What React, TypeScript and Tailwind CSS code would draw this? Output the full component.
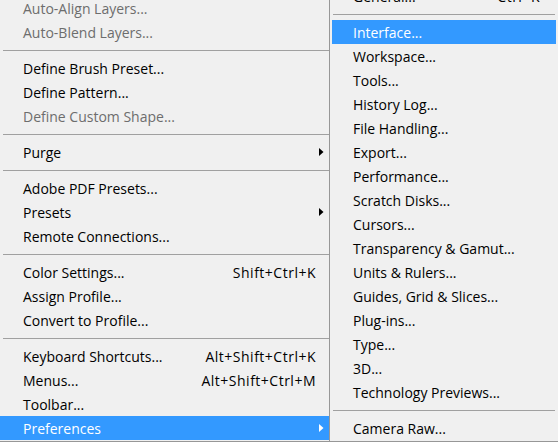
type Entry =
  | { sep: true }
  | {
      sep?: false;
      label: string;
      shortcut?: string;
      disabled?: boolean;
      sub?: boolean;
      active?: boolean;
    };

const editMenu: Entry[] = [
  { label: "Auto-Align Layers...", disabled: true },
  { label: "Auto-Blend Layers...", disabled: true },
  { sep: true },
  { label: "Define Brush Preset..." },
  { label: "Define Pattern..." },
  { label: "Define Custom Shape...", disabled: true },
  { sep: true },
  { label: "Purge", sub: true },
  { sep: true },
  { label: "Adobe PDF Presets..." },
  { label: "Presets", sub: true },
  { label: "Remote Connections..." },
  { sep: true },
  { label: "Color Settings...", shortcut: "Shift+Ctrl+K" },
  { label: "Assign Profile..." },
  { label: "Convert to Profile..." },
  { sep: true },
  { label: "Keyboard Shortcuts...", shortcut: "Alt+Shift+Ctrl+K" },
  { label: "Menus...", shortcut: "Alt+Shift+Ctrl+M" },
  { label: "Toolbar..." },
  { label: "Preferences", sub: true, active: true },
];

const prefsMenu: Entry[] = [
  { label: "General...", shortcut: "Ctrl+K" },
  { sep: true },
  { label: "Interface...", active: true },
  { label: "Workspace..." },
  { label: "Tools..." },
  { label: "History Log..." },
  { label: "File Handling..." },
  { label: "Export..." },
  { label: "Performance..." },
  { label: "Scratch Disks..." },
  { label: "Cursors..." },
  { label: "Transparency & Gamut..." },
  { label: "Units & Rulers..." },
  { label: "Guides, Grid & Slices..." },
  { label: "Plug-ins..." },
  { label: "Type..." },
  { label: "3D..." },
  { label: "Technology Previews..." },
  { sep: true },
  { label: "Camera Raw..." },
];

function Arrow({ light }: { light?: boolean }) {
  return (
    <svg width="5" height="8" viewBox="0 0 5 8" className="block">
      <path d="M0 0 L4.5 4 L0 8 Z" fill={light ? "#ffffff" : "#000000"} />
    </svg>
  );
}

function MenuList({
  items,
  padLeft,
  sepClass,
  trail,
}: {
  items: Entry[];
  padLeft: string;
  sepClass: string;
  trail: string;
}) {
  return (
    <div className="flex flex-col">
      {items.map((it, i) => {
        if (it.sep) {
          return (
            <div key={i} className="h-3 flex flex-col justify-center">
              <div className={`h-px bg-[#a0a0a0] ${sepClass}`} />
            </div>
          );
        }
        const color = it.active
          ? "bg-[#3399ff] text-white"
          : it.disabled
            ? "text-[#6d6d6d]"
            : "text-black";
        return (
          <div
            key={i}
            className={`flex items-center h-6 whitespace-nowrap ${padLeft} ${color}`}
          >
            <span className="flex-1 pt-px leading-[23px]">{it.label}</span>
            {it.shortcut && (
              <span className="pt-px leading-[23px] tracking-[0.5px]">
                {it.shortcut}
              </span>
            )}
            <span className={`${trail} flex items-center pl-[3px]`}>
              {it.sub && <Arrow light={it.active} />}
            </span>
          </div>
        );
      })}
    </div>
  );
}

export default function App() {
  return (
    <div className="w-[558px] h-[443px] overflow-hidden bg-white font-['Open_Sans','Noto_Sans',sans-serif] text-[14px]">
      <div className="flex items-start h-[442px]">
        <div className="w-[330px] shrink-0 h-[442px] bg-[#f0f0f0] border-r border-b border-[#979797] overflow-hidden">
          <div className="-mt-[4px]">
            <MenuList
              items={editMenu}
              padLeft="pl-[23px]"
              sepClass="ml-[3px]"
              trail="w-[13px]"
            />
          </div>
        </div>
        <div className="flex-1 h-[442px] bg-[#f0f0f0] border-b border-[#979797] px-[2px] overflow-hidden">
          <div className="-mt-[16px]">
            <MenuList
              items={prefsMenu}
              padLeft="pl-[21px]"
              sepClass="mx-[1px]"
              trail="w-[16px]"
            />
          </div>
        </div>
      </div>
    </div>
  );
}
